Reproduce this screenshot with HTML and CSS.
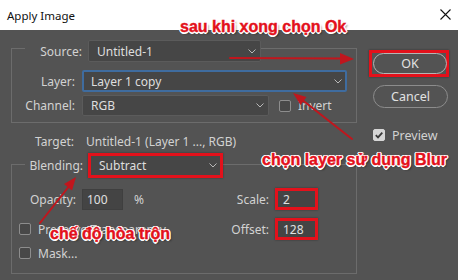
FILE: index.html
```html
<!DOCTYPE html>
<html lang="vi">
<head>
<meta charset="utf-8">
<title>Apply Image</title>
<link rel="stylesheet" href="styles.css">
</head>
<body>
<div class="titlebar">
  <span class="title">Apply Image</span>
  <svg class="close" width="11" height="11" viewBox="0 0 11 11"><path d="M0.5 0.5L10.5 10.5M10.5 0.5L0.5 10.5" stroke="#111" stroke-width="1.1" fill="none"/></svg>
</div>
<div class="main">
  <div class="left">
    <div class="group g1">
      <div class="legend lg1">
        <span class="lbl lbl-src">Source:</span>
        <div class="select sel-source"><span>Untitled-1</span><svg class="chev" width="8" height="5" viewBox="0 0 8 5"><path d="M0.5 0.5L4 4L7.5 0.5" stroke="#b8b8b8" fill="none"/></svg></div>
      </div>
      <div class="row r-layer">
        <span class="lbl">Layer:</span>
        <div class="select sel-layer"><span>Layer 1 copy</span><svg class="chev" width="8" height="5" viewBox="0 0 8 5"><path d="M0.5 0.5L4 4L7.5 0.5" stroke="#b8b8b8" fill="none"/></svg></div>
      </div>
      <div class="row r-channel">
        <span class="lbl">Channel:</span>
        <div class="select sel-channel"><span>RGB</span><svg class="chev" width="8" height="5" viewBox="0 0 8 5"><path d="M0.5 0.5L4 4L7.5 0.5" stroke="#b8b8b8" fill="none"/></svg></div>
        <span class="check ch-invert"></span><span class="ctext">Invert</span>
      </div>
    </div>
    <div class="row r-target">
      <span class="lbl">Target:</span>
      <span class="val">Untitled-1 (Layer 1 ..., RGB)</span>
    </div>
    <div class="group g2">
      <div class="legend lg2">
        <span class="lbl lbl-blend">Blending:</span>
        <div class="select sel-blend"><span>Subtract</span><svg class="chev" width="8" height="5" viewBox="0 0 8 5"><path d="M0.5 0.5L4 4L7.5 0.5" stroke="#b8b8b8" fill="none"/></svg></div>
      </div>
      <div class="row r-opacity">
        <span class="lbl lbl-op">Opacity:</span>
        <div class="input in-op">100</div>
        <span class="pct">%</span>
        <div class="pair">
          <span class="lbl2">Scale:</span>
          <div class="input in-hl">2</div>
        </div>
      </div>
      <div class="row r-offset">
        <span class="check ch-row"></span><span class="ctext">Preserve Transparency</span>
        <div class="pair">
          <span class="lbl2">Offset:</span>
          <div class="input in-hl">128</div>
        </div>
      </div>
      <div class="row r-mask">
        <span class="check ch-row"></span><span class="ctext">Mask...</span>
      </div>
    </div>
  </div>
  <div class="right">
    <div class="okwrap"><div class="btn btn-ok">OK</div></div>
    <div class="btn btn-cancel">Cancel</div>
    <div class="prev">
      <span class="check on"><svg width="10" height="10" viewBox="0 0 10 10"><path d="M1.8 5.2L4 7.4L8.3 2.6" stroke="#3a3a3a" stroke-width="1.8" fill="none"/></svg></span>
      <span class="ctext">Preview</span>
    </div>
  </div>
</div>

<svg class="arrows" width="458" height="280" viewBox="0 0 458 280">
  <g stroke="#c0161d" stroke-width="2" fill="none" stroke-linecap="round">
    <path d="M230 58L343 58.6"/>
    <path d="M352 139L301 99"/>
    <path d="M40 223L70 185"/>
  </g>
  <g fill="#c0161d">
    <polygon points="340,53 354,59 340,64.5"/>
    <polygon points="293,93 306.5,97 300.5,105"/>
    <polygon points="76,177 72,190.5 64,184"/>
  </g>
</svg>
<span class="note n1">sau khi xong chọn Ok</span>
<span class="note n2">chọn layer sử dụng Blur</span>
<span class="note n3">chế độ hòa trộn</span>
</body>
</html>
```

FILE: styles.css
```css
* { box-sizing: border-box; }
html, body { margin: 0; padding: 0; }
body {
  width: 458px;
  height: 280px;
  overflow: hidden;
  background: #535353;
  font-family: "Noto Sans", "DejaVu Sans", sans-serif;
  font-size: 12px;
  color: #d2d2d2;
  position: relative;
}

.titlebar {
  height: 30px;
  background: #ffffff;
  display: flex;
  align-items: center;
  justify-content: space-between;
  padding: 0 7px 0 7px;
}
.title { color: #111; font-size: 11.5px; }
.close { display: block; margin-top: -1px; }

.main { display: flex; height: 250px; }
.left { width: 357px; padding-left: 11px; }
.right { flex: 1; padding-left: 12px; display: flex; flex-direction: column; }

.group {
  border: 1px solid #6c6c6c;
  width: 346px;
}
.g1 { margin-top: 18px; padding-bottom: 6px; }
.g2 { margin-top: 13px; padding-bottom: 9px; }

.legend {
  display: flex;
  align-items: center;
  background: #535353;
  margin-left: 13px;
  width: max-content;
}
.lg1 { margin-top: -9px; height: 22px; }
.lg2 { margin-top: -12px; height: 25px; }

.lbl { text-align: right; white-space: nowrap; }
.lbl-src { width: 57px; margin-right: 6px; }
.lbl-blend { width: 58px; margin-right: 5px; }

.row { display: flex; align-items: center; }
.row > .lbl { width: 63px; margin-right: 7px; }

.select {
  display: flex;
  align-items: center;
  justify-content: space-between;
  background: #464646;
  border: 1px solid #5b5b5b;
  border-radius: 2px;
  padding: 0 4px 0 8px;
  color: #dedede;
}
.chev { display: block; }
.sel-source { width: 173px; height: 22px; }
.r-layer { margin-top: 8px; height: 22px; }
.sel-layer { width: 265px; height: 22px; border: 2px solid #3f6c9f; padding-left: 7px; padding-right: 3px; }
.r-channel { margin-top: 3px; height: 21px; }
.sel-channel { width: 187px; height: 21px; }

.check {
  width: 12px;
  height: 12px;
  border: 1px solid #8d8d8d;
  border-radius: 2px;
  background: #484848;
  flex: none;
  display: flex;
  align-items: center;
  justify-content: center;
}
.check.on { background: #d6d6d6; border-color: #d6d6d6; }
.check svg { display: block; }
.ch-invert { margin-left: 10px; }
.ctext { margin-left: 7px; white-space: nowrap; }

.r-target { margin-top: 8px; height: 20px; }
.r-target > .lbl { margin-right: 12px; }
.val { color: #d2d2d2; white-space: nowrap; }

.sel-blend {
  width: 135px;
  height: 25px;
  border: 3px solid #e3111b;
  border-radius: 0;
  padding-left: 8px;
  padding-right: 3px;
  box-shadow: 0 0 2px rgba(0,0,0,0.35);
}

.r-opacity { margin-top: 10px; height: 22px; margin-right: 38px; }
.r-opacity > .lbl-op { width: 64px; margin-right: 6px; }
.input {
  background: #444444;
  border: 1px solid #3f3f3f;
  height: 22px;
  display: flex;
  align-items: center;
  color: #e0e0e0;
}
.in-op { width: 41px; height: 21px; padding-left: 4px; }
.pct { margin-left: 11px; }
.pair { margin-left: auto; display: flex; align-items: center; }
.lbl2 { margin-right: 6px; }
.in-hl {
  width: 43px;
  border: 3px solid #e3111b;
  padding-left: 5px;
  box-shadow: 0 0 2px rgba(0,0,0,0.35);
}

.r-offset { margin-top: 8px; height: 22px; margin-right: 38px; }
.ch-row { margin-left: 7px; }
.r-mask { margin-top: 2px; height: 22px; }

.okwrap {
  margin-top: 20px;
  width: 80px;
  height: 27px;
  border: 3px solid #e3111b;
  padding-left: 1px;
  box-shadow: 0 0 2px rgba(0,0,0,0.4);
}
.btn {
  display: flex;
  align-items: center;
  justify-content: center;
  border: 1px solid #9c9c9c;
  border-radius: 12px;
  color: #e2e2e2;
  font-size: 12.5px;
}
.btn-ok { width: 74px; height: 21px; border-color: #b4b4b4; }
.btn-cancel { margin-top: 8px; margin-left: 4px; width: 75px; height: 23px; border-color: #8c8c8c; }
.prev { margin-top: 17px; margin-left: 4px; height: 20px; display: flex; align-items: center; }
.prev .ctext { font-size: 12.5px; }

.arrows { position: absolute; left: 0; top: 0; pointer-events: none; }

.note {
  position: absolute;
  font-family: "Liberation Sans", Arial, sans-serif;
  font-weight: bold;
  font-size: 16px;
  line-height: 18px;
  color: #e3111b;
  white-space: nowrap;
  -webkit-text-stroke: 0.4px #e3111b;
  text-shadow:
    1.5px 0 0 #fff, -1.5px 0 0 #fff, 0 1.5px 0 #fff, 0 -1.5px 0 #fff,
    1px 1px 0 #fff, -1px -1px 0 #fff, 1px -1px 0 #fff, -1px 1px 0 #fff,
    2px 2px 2px rgba(0,0,0,0.45);
}
.n1 { left: 180px; top: 18px; }
.n2 { left: 262px; top: 151px; }
.n3 { left: 50px; top: 225px; }
```
